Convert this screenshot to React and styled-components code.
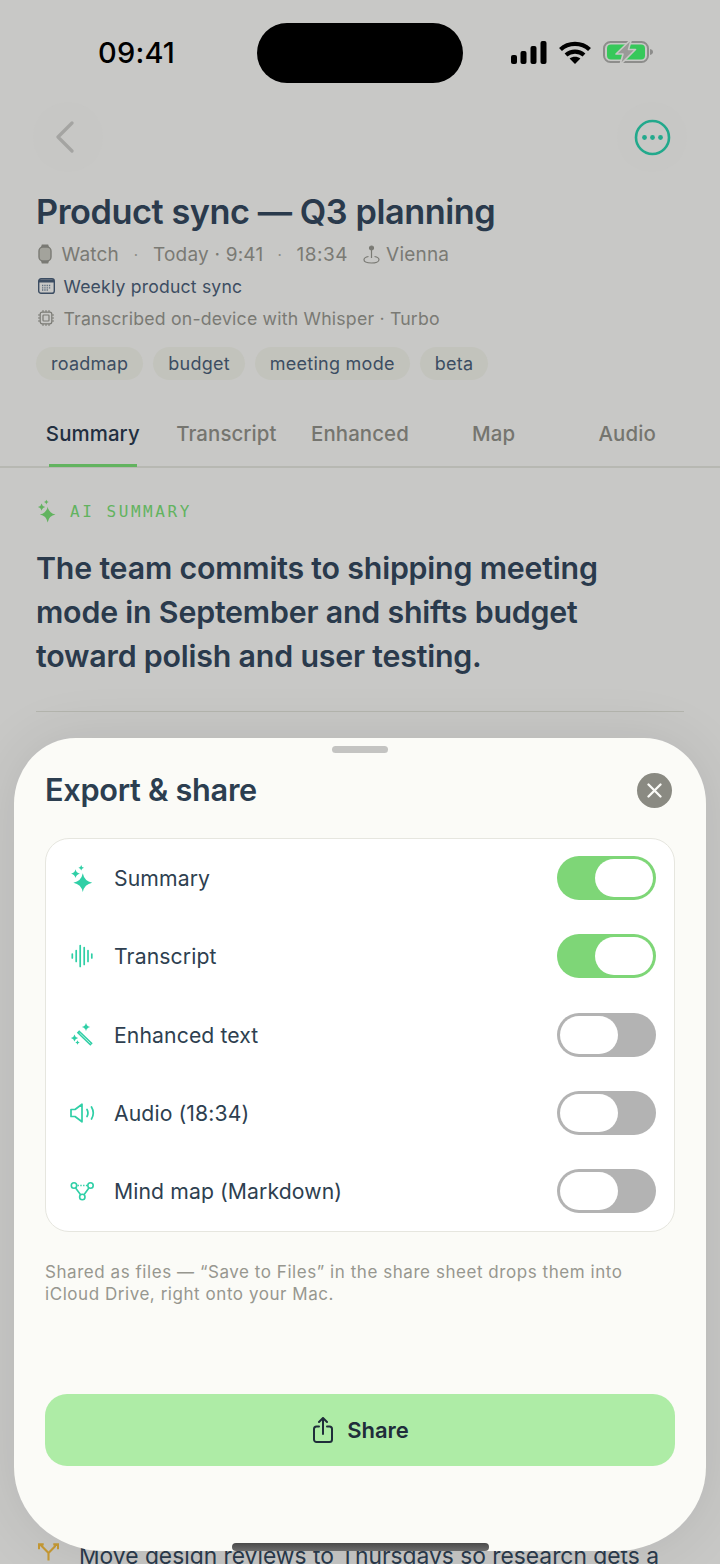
import React from "react";
import styled, { createGlobalStyle } from "styled-components";

const Global = createGlobalStyle`
  html, body { margin: 0; padding: 0; background: #c8c8c6; }
  * { box-sizing: border-box; }
  body { font-family: Inter, "Noto Sans", sans-serif; }
`;
const Page = styled.div`
  position: relative; width: 720px; height: 1564px; overflow: hidden; background: #c8c8c6;
`;
const StatusBar = styled.div`
  display: flex; align-items: center; height: 60px; margin-top: 23px; padding-left: 98px;
`;
const Clock = styled.div`
  width: 159px; font-size: 29px; font-weight: 500; color: #000; line-height: 60px; margin-top: -1px;
  font-family: Inter, sans-serif; letter-spacing: 0.2px;
`;
const Island = styled.div`width: 206px; height: 60px; border-radius: 30px; background: #000;`;
const StatusIcons = styled.div`
  display: flex; align-items: center; margin-left: 47px; margin-top: -2px;
`;
const NavBar = styled.div`
  display: flex; justify-content: space-between; padding: 19px 33px 0 33px;
`;
const RoundBtn = styled.div`
  width: 70px; height: 70px; border-radius: 50%; background: #c7c7c5;
  display: flex; align-items: center; justify-content: center;
`;
const Head = styled.div`padding: 0 36px;`;
const Title = styled.h1`
  margin: 18px 0 0; font-size: 34.3px; line-height: 44px; font-weight: 600; color: #2a3a4c; letter-spacing: -0.45px;
  white-space: nowrap;
`;
const Meta = styled.div`
  display: flex; align-items: center; height: 32px; font-size: ${p => p.$fs || 19}px; color: ${p => p.$c || "#7a7a74"};
  white-space: nowrap; letter-spacing: 0.2px;
`;
const MetaIcon = styled.span`
  display: inline-flex; width: ${p => p.$w || 27.5}px; margin-left: ${p => p.$ml || 0}px; flex: none; padding-left: 2px;
`;
const Dot = styled.span`width: ${p => p.$w}px; text-align: center; font-size: 15px; color: #8c8c86;`;
const Duration = styled.span`letter-spacing: 0.55px;`;
const Tags = styled.div`display: flex; gap: 10px; margin-top: 13px;`;
const Tag = styled.span`
  height: 33px; padding: 0 15px; border-radius: 17px; background: #c2c3bc; color: #3c4d62;
  font-size: 18px; letter-spacing: 0.25px; line-height: 33px;
`;
const Tabs = styled.div`
  display: flex; margin-top: 22px; padding: 0 26px; height: 66px; border-bottom: 2px solid #b7b8b2;
`;
const TabItem = styled.div`
  position: relative; flex: 1; text-align: center; font-size: 20.4px; line-height: 66px; margin-top: -1px;
  font-weight: 500; color: ${p => p.$on ? "#222f40" : "#75756f"}; letter-spacing: 0.1px;
  ${p => p.$on && `&::after { content: ""; position: absolute; left: 23px; bottom: -1px; width: 88px; height: 3px; background: #62b35f; }`}
`;
const Body = styled.div`padding: 31px 36px 0;`;
const Eyebrow = styled.div`
  display: flex; align-items: center; gap: 13px; height: 24px; padding-left: 1px;
  font-family: "DejaVu Sans Mono", monospace; font-size: 16px; letter-spacing: 2.55px; color: #62b35f;
`;
const Lead = styled.p`
  margin: 23px 0 0; font-size: 30.35px; line-height: 44px; font-weight: 600; color: #2a3a4c; letter-spacing: -0.2px;
`;
const Rule = styled.div`height: 1px; background: #b4b5ae; margin-top: 33px;`;
const Bullet = styled.div`
  display: flex; align-items: flex-start; gap: 20px; margin-top: 829px; padding-left: 2px;
  font-size: 22.8px; line-height: 30px; color: #2a3a4c; white-space: nowrap;
`;
const Sheet = styled.div`
  position: absolute; left: 14px; top: 738px; width: 692px; height: 813px; background: #fbfbf7;
  border-radius: 62px 62px 90px 90px / 66px 66px 84px 84px; box-shadow: 0 0 60px rgba(0,0,0,0.09);
  padding: 0 31px; display: flex; flex-direction: column;
`;
const Grabber = styled.div`
  width: 56px; height: 7px; border-radius: 4px; background: #c4c4c2; margin: 8px auto 0;
`;
const SheetHead = styled.div`
  display: flex; align-items: center; justify-content: space-between; height: 36px; margin-top: 19px; padding: 0 3px 0 0;
`;
const SheetTitle = styled.h2`
  margin: -2px 0 0; font-size: 30.7px; font-weight: 600; color: #2c3e50; letter-spacing: -0.3px;
`;
const Close = styled.div`
  width: 35px; height: 35px; border-radius: 50%; background: #8a8a82;
  display: flex; align-items: center; justify-content: center;
`;
const Card = styled.div`
  margin-top: 30px; width: 630px; height: 394px; border: 1.5px solid #e6e6df; border-radius: 24px; background: #fff;
  padding: 0 18px 1px 24px; display: flex; flex-direction: column; justify-content: center;
`;
const Row = styled.div`display: flex; align-items: center; height: 78.8px;`;
const RowIcon = styled.span`width: 44px; flex: none; display: inline-flex;`;
const RowLabel = styled.span`flex: 1; font-size: 21.2px; color: #2e3f50; letter-spacing: 0.1px;`;
const Toggle = styled.div`
  width: 99px; height: 44px; padding: 3px; border-radius: 22px; display: flex;
  justify-content: ${p => p.$on ? "flex-end" : "flex-start"};
  background: ${p => p.$on ? "#7ed677" : "#b3b3b3"};
`;
const Knob = styled.div`width: 58px; height: 38px; border-radius: 19px; background: #fff;`;
const Note = styled.p`
  margin: 29px 0 0; padding-right: 30px; font-size: 17px; line-height: 22px; color: #97978f; letter-spacing: 0.55px;
`;
const ShareBtn = styled.div`
  margin-top: auto; margin-bottom: 85px; height: 72px; border-radius: 22px; background: #aeeca6;
  display: flex; align-items: center; justify-content: center; gap: 14px; padding-left: 2px;
  font-size: 22px; font-weight: 600; color: #1f2d3a;
`;
const Home = styled.div`
  position: absolute; left: 232px; top: 1543px; width: 257px; height: 8px; border-radius: 4px;
  background: linear-gradient(#4a4a4a, #6c6c6c);
`;

const Signal = () => (
  <svg width="37" height="23" viewBox="0 0 37 23" fill="#000" style={{ marginRight: 12 }}>
    <rect x="1" y="14" width="6" height="9" rx="2" /><rect x="10.5" y="10" width="6" height="13" rx="2" />
    <rect x="20.5" y="5" width="6" height="18" rx="2" /><rect x="30.5" y="0" width="6" height="23" rx="2" />
  </svg>
);
const Wifi = () => (
  <svg width="32" height="23" viewBox="0 0 32 23" style={{ marginRight: 12 }}>
    <path d="M1.5 8.5C9.5 1 22.5 1 30.5 8.5" fill="none" stroke="#000" strokeWidth="4.2" />
    <path d="M7 14C12 9.6 20 9.6 25 14" fill="none" stroke="#000" strokeWidth="4.2" />
    <path d="M10.6 17.6C13.6 15 18.4 15 21.4 17.6L16 23Z" fill="#000" />
  </svg>
);
const Battery = () => (
  <svg width="51" height="26" viewBox="0 0 51 26">
    <rect x="1" y="3" width="44" height="20" rx="6.5" fill="none" stroke="#8d8d8b" strokeWidth="2" />
    <rect x="4" y="5.5" width="38" height="15" rx="4" fill="#37c85a" />
    <path d="M47 10c2 .4 3 1.6 3 3s-1 2.6-3 3z" fill="#8d8d8b" />
    <path d="M28.5 0 L13 15 H20 L17 26 L32.5 10.5 H25.5 Z" fill="#9a9a98" stroke="#c8c8c6" strokeWidth="1.6" strokeLinejoin="round" />
  </svg>
);
const Back = () => (
  <svg width="22" height="32" viewBox="0 0 22 32" style={{ marginRight: 6 }}>
    <path d="M18 2 L4 16 L18 30" fill="none" stroke="#a4a4a2" strokeWidth="3.2" strokeLinecap="round" strokeLinejoin="round" />
  </svg>
);
const More = () => (
  <svg width="37" height="37" viewBox="0 0 37 37">
    <circle cx="18.5" cy="18.5" r="16.5" fill="none" stroke="#22a98c" strokeWidth="2.6" />
    <circle cx="10.5" cy="18.5" r="2.4" fill="#22a98c" /><circle cx="18.5" cy="18.5" r="2.4" fill="#22a98c" /><circle cx="26.5" cy="18.5" r="2.4" fill="#22a98c" />
  </svg>
);
const WatchIcon = () => (
  <svg width="14" height="20" viewBox="0 0 14 20">
    <path d="M3 3.2 L3.8 0.4 H10.2 L11 3.2 Z M3 16.8 L3.8 19.6 H10.2 L11 16.8 Z" fill="#7a7a74" />
    <rect x="1" y="3" width="12" height="14" rx="4" fill="#a3a39c" stroke="#7a7a74" strokeWidth="1.4" />
  </svg>
);
const CalIcon = () => (
  <svg width="17" height="16" viewBox="0 0 17 16">
    <rect x=".7" y=".7" width="15.6" height="14.6" rx="2.4" fill="none" stroke="#3c4d62" strokeWidth="1.4" />
    <path d="M1 1.5h15v3H1z" fill="#3c4d62" />
    <path d="M4 7.5h9M4 9.8h9M4 12h6" stroke="#5c6b7c" strokeWidth="1.3" strokeDasharray="1.3 1" />
  </svg>
);
const ChipIcon = () => (
  <svg width="16" height="16" viewBox="0 0 16 16" fill="none" stroke="#7a7a74">
    <rect x="2.2" y="2.2" width="11.6" height="11.6" rx="2" strokeWidth="1.2" />
    <rect x="5" y="5" width="6" height="6" rx=".8" strokeWidth="1.2" />
    <path d="M5 0v2M8 0v2M11 0v2M5 14v2M8 14v2M11 14v2M0 5h2M0 8h2M0 11h2M14 5h2M14 8h2M14 11h2" strokeWidth="1" />
  </svg>
);
const PinIcon = () => (
  <svg width="17" height="19" viewBox="0 0 17 19" fill="none" stroke="#7a7a74" strokeWidth="1.2">
    <circle cx="8.5" cy="3" r="2" fill="#7a7a74" />
    <path d="M8.5 5v8" />
    <path d="M5.5 11.5C2.8 12 1 13.2 1 14.8c0 1.8 3.3 3.2 7.5 3.2s7.5-1.4 7.5-3.2c0-1.6-1.8-2.8-4.5-3.3" />
  </svg>
);
const star = (x, y, r) => {
  const k = r * 0.16;
  return `M${x} ${y - r}Q${x + k} ${y - k} ${x + r} ${y}Q${x + k} ${y + k} ${x} ${y + r}Q${x - k} ${y + k} ${x - r} ${y}Q${x - k} ${y - k} ${x} ${y - r}Z`;
};
const Sparkle = ({ c, w = 24 }) => (
  <svg width={w} height={w * 28 / 24} viewBox="0 0 24 28" fill={c}>
    <path d={star(12.8, 18.7, 9.4)} />
    <path d={star(5.5, 9.7, 4.4)} />
    <path d={star(11.2, 3.7, 2.8)} />
  </svg>
);
const T = "#2fcfa6";
const Wave = () => (
  <svg width="22" height="24" viewBox="0 0 22 24" stroke={T} strokeWidth="1.7" strokeLinecap="round" style={{ marginLeft: 1 }}>
    <path d="M1.3 10v4M5.2 6.5v11M9.2 1.5v21M13.2 3.5v17M17 6.5v11M20.8 10v4" />
  </svg>
);
const Wand = () => (
  <svg width="24" height="24" viewBox="0 0 24 24">
    <path d="M8 8.5 L21.5 21.5" stroke={T} strokeWidth="3.4" />
    <path d="M9.5 10 L20.5 20.5" stroke="#bff2e3" strokeWidth="1" />
    <path d={`${star(16, 4, 4.2)} ${star(4.5, 15, 3.6)} ${star(7.5, 19.5, 2.2)}`} fill={T} />
  </svg>
);
const Speaker = () => (
  <svg width="26" height="20" viewBox="0 0 26 20" fill="none" stroke={T} strokeWidth="1.7" strokeLinecap="round" strokeLinejoin="round">
    <path d="M1 6.5h4L12 1.2v17.6L5 13.5H1z" />
    <path d="M17 6.5c1.2 2.2 1.2 4.8 0 7M21.5 4c2.2 3.7 2.2 8.3 0 12" />
  </svg>
);
const Graph = () => (
  <svg width="24" height="20" viewBox="0 0 24 20" fill="none" stroke={T} strokeWidth="1.6">
    <circle cx="4" cy="4.5" r="2.7" /><circle cx="20.5" cy="4.5" r="2.7" /><circle cx="12.3" cy="16" r="2.7" />
    <path d="M7.5 4.5h9.5" strokeDasharray="1.4 1.4" /><path d="M5.6 7 L10.6 13.8M18.9 7 L14 13.8" />
  </svg>
);
const X = () => (
  <svg width="15" height="15" viewBox="0 0 15 15"><path d="M1.5 1.5l12 12M13.5 1.5l-12 12" stroke="#fbfbf7" strokeWidth="2.3" strokeLinecap="round" /></svg>
);
const ShareIcon = () => (
  <svg width="20" height="26" viewBox="0 0 20 26" fill="none" stroke="#1f2d3a" strokeWidth="2" strokeLinecap="round" strokeLinejoin="round">
    <path d="M6 9.5H3.5a2.5 2.5 0 0 0-2.5 2.5v10.5A2.5 2.5 0 0 0 3.5 25h13a2.5 2.5 0 0 0 2.5-2.5V12a2.5 2.5 0 0 0-2.5-2.5H14" />
    <path d="M10 17V1.5M6 5l4-4 4 4" />
  </svg>
);
const Split = () => (
  <svg width="21" height="18" viewBox="0 0 22 18" fill="none" stroke="#c69a35" strokeWidth="2.2" style={{ marginTop: 2 }}>
    <path d="M11 18v-8L2 1M11 10l9-9M1 6V1h5M21 6V1h-5" />
  </svg>
);

const rows = [
  { icon: <Sparkle c={T} w={24} />, label: "Summary", on: true },
  { icon: <Wave />, label: "Transcript", on: true },
  { icon: <Wand />, label: "Enhanced text", on: false },
  { icon: <Speaker />, label: "Audio (18:34)", on: false },
  { icon: <Graph />, label: "Mind map (Markdown)", on: false },
];

export default function App() {
  return (
    <Page>
      <Global />
      <StatusBar>
        <Clock>09:41</Clock>
        <Island />
        <StatusIcons><Signal /><Wifi /><Battery /></StatusIcons>
      </StatusBar>
      <NavBar>
        <RoundBtn><Back /></RoundBtn>
        <RoundBtn><More /></RoundBtn>
      </NavBar>
      <Head>
        <Title>Product sync — Q3 planning</Title>
        <Meta style={{ marginTop: 4 }}>
          <MetaIcon $w={25.5}><WatchIcon /></MetaIcon>Watch<Dot $w={34}>·</Dot>Today · 9:41<Dot $w={33}>·</Dot><Duration>18:34</Duration>
          <MetaIcon $w={25} $ml={13}><PinIcon /></MetaIcon>Vienna
        </Meta>
        <Meta $c="#3c4d62" $fs={17.6}><MetaIcon><CalIcon /></MetaIcon>Weekly product sync</Meta>
        <Meta $fs={17.7}><MetaIcon><ChipIcon /></MetaIcon>Transcribed on-device with Whisper · Turbo</Meta>
        <Tags>
          <Tag>roadmap</Tag><Tag>budget</Tag><Tag>meeting mode</Tag><Tag>beta</Tag>
        </Tags>
      </Head>
      <Tabs>
        <TabItem $on>Summary</TabItem>
        <TabItem>Transcript</TabItem>
        <TabItem>Enhanced</TabItem>
        <TabItem>Map</TabItem>
        <TabItem>Audio</TabItem>
      </Tabs>
      <Body>
        <Eyebrow><Sparkle c="#62b35f" w={20} />AI SUMMARY</Eyebrow>
        <Lead>The team commits to shipping meeting mode in September and shifts budget toward polish and user testing.</Lead>
        <Rule />
        <Bullet><Split />Move design reviews to Thursdays so research gets a</Bullet>
      </Body>
      <Sheet>
        <Grabber />
        <SheetHead>
          <SheetTitle>Export &amp; share</SheetTitle>
          <Close><X /></Close>
        </SheetHead>
        <Card>
          {rows.map(r => (
            <Row key={r.label}>
              <RowIcon>{r.icon}</RowIcon>
              <RowLabel>{r.label}</RowLabel>
              <Toggle $on={r.on}><Knob /></Toggle>
            </Row>
          ))}
        </Card>
        <Note>Shared as files — “Save to Files” in the share sheet drops them into iCloud Drive, right onto your Mac.</Note>
        <ShareBtn><ShareIcon />Share</ShareBtn>
      </Sheet>
      <Home />
    </Page>
  );
}
